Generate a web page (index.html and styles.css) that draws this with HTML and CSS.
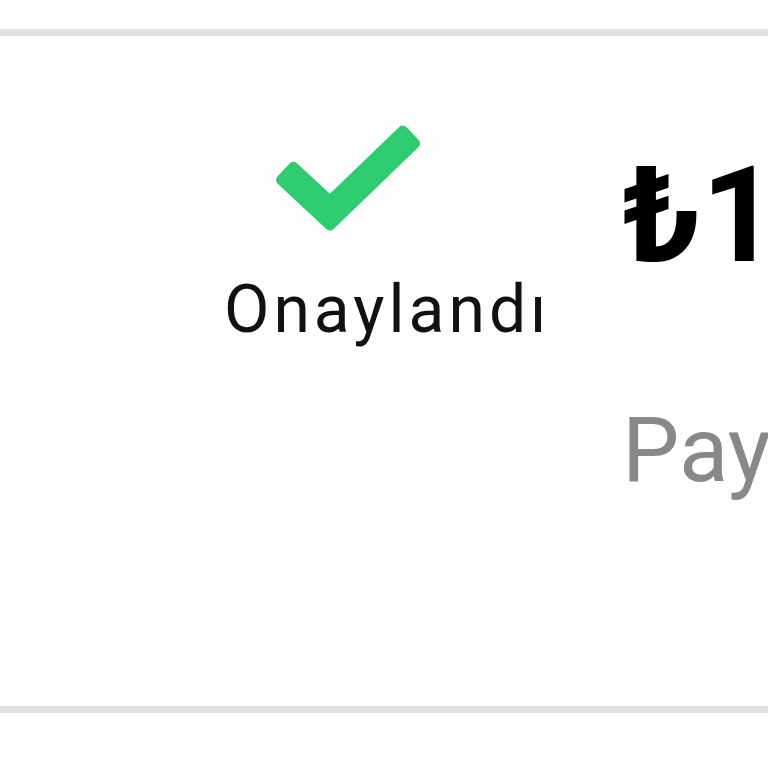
FILE: index.html
```html
<!DOCTYPE html>
<html lang="tr">
<head>
  <meta charset="UTF-8">
  <meta name="viewport" content="width=device-width, initial-scale=1.0">
  <title>Ödeme</title>
  <link rel="stylesheet" href="styles.css">
</head>
<body>
  <div class="divider"></div>
  <section class="payment-row">
    <div class="status">
      <svg class="check" width="160" height="120" viewBox="0 0 160 120">
        <polygon points="23.3,46.8 60,80.6 132.7,10.5 145.1,23.5 60,105.6 11.1,60" fill="#2ecc71" stroke="#2ecc71" stroke-width="10" stroke-linejoin="round"/>
      </svg>
      <span class="status-text">Onaylandı</span>
    </div>
    <div class="details">
      <div class="amount">₺1.250,00</div>
      <div class="method">PayPal ile ödendi</div>
    </div>
  </section>
  <div class="divider"></div>
</body>
</html>
```

FILE: styles.css
```css
body {
  margin: 0;
  background: #fefefe;
  font-family: Roboto, "Noto Sans", sans-serif;
  overflow: hidden;
  width: 768px;
  height: 768px;
}

.divider {
  height: 7px;
  background: #e1e1e1;
}

body > .divider:first-child {
  margin-top: 29px;
}

.payment-row {
  display: flex;
  height: 670px;
  white-space: nowrap;
}

.status {
  width: 398px;
  flex-shrink: 0;
  padding-left: 224px;
  padding-top: 84px;
  display: flex;
  flex-direction: column;
  align-items: flex-start;
}

.check {
  margin-left: 46px;
}

.status-text {
  font-size: 66px;
  line-height: 1;
  color: #111;
  margin-top: 37px;
  letter-spacing: 4px;
}

.details {
  padding-top: 113px;
}

.amount {
  font-size: 134px;
  font-weight: 700;
  line-height: 1;
  color: #000;
}

.method {
  font-size: 91px;
  line-height: 1;
  color: #888;
  margin-top: 122px;
}
```
